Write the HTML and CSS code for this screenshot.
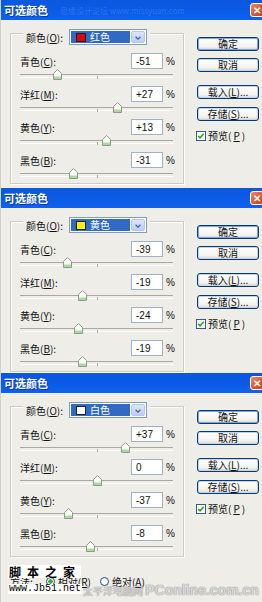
FILE: index.html
```html
<!DOCTYPE html>
<html>
<head>
    <meta charset="UTF-8">
    <link rel="stylesheet" href="styles.css">
</head>
<body>
    <svg class="defs" width="0" height="0">
        <symbol id="thumb" viewBox="0 0 9 11">
            <path d="M.5 10.5V4.5L4.5.5l4 4v6z" fill="#fbfdf9" stroke="#8a9c8b"/>
            <path d="M1 7.5h7v2.5H1z" fill="#a9dc98"/>
        </symbol>
        <symbol id="chev" viewBox="0 0 14 15">
            <path d="M4 6l3 3 3-3" fill="none" stroke="#4d6185" stroke-width="1.6"/>
        </symbol>
        <symbol id="check" viewBox="0 0 11 11">
            <rect x=".5" y=".5" width="10" height="10" fill="#fff" stroke="#1c5180"/>
            <path d="M2.5 5.5l2 2 4-4.5" fill="none" stroke="#21a121" stroke-width="1.6"/>
        </symbol>
    </svg>

    <!-- 红色 -->
    <div class="dialog d1">
        <div class="titlebar">
            <span class="title">可选颜色</span>
            <span class="title-mark">思缘设计论坛 www.missyuan.com</span>
            <span class="close">✕</span>
        </div>
        <div class="body">
            <div class="group">
                <div class="color-row">
                    <span class="lbl">颜色(<u>O</u>):</span>
                    <div class="combo">
                        <span class="sel"><i class="swatch red"></i>红色</span>
                        <span class="arrow"><svg><use href="#chev"/></svg></span>
                    </div>
                </div>
                <div class="adjs">
                    <div class="adj">
                        <div class="adj-top"><span class="lbl">青色(<u>C</u>):</span><input class="num" type="text" value="-51"><span class="pct">%</span></div>
                        <div class="slider"><svg class="thumb" style="left:24.5%"><use href="#thumb"/></svg></div>
                    </div>
                    <div class="adj">
                        <div class="adj-top"><span class="lbl">洋红(<u>M</u>):</span><input class="num" type="text" value="+27"><span class="pct">%</span></div>
                        <div class="slider"><svg class="thumb" style="left:63.5%"><use href="#thumb"/></svg></div>
                    </div>
                    <div class="adj">
                        <div class="adj-top"><span class="lbl">黄色(<u>Y</u>):</span><input class="num" type="text" value="+13"><span class="pct">%</span></div>
                        <div class="slider"><svg class="thumb" style="left:56.5%"><use href="#thumb"/></svg></div>
                    </div>
                    <div class="adj">
                        <div class="adj-top"><span class="lbl">黑色(<u>B</u>):</span><input class="num" type="text" value="-31"><span class="pct">%</span></div>
                        <div class="slider"><svg class="thumb" style="left:34.5%"><use href="#thumb"/></svg></div>
                    </div>
                </div>
            </div>
            <div class="side">
                <button class="btn btn-ok">确定</button>
                <button class="btn btn-cancel">取消</button>
                <button class="btn btn-load">载入(<u>L</u>)...</button>
                <button class="btn btn-save">存储(<u>S</u>)...</button>
                <label class="preview"><svg class="chk"><use href="#check"/></svg>预览(<u>P</u>)</label>
            </div>
        </div>
    </div>

    <!-- 黄色 -->
    <div class="dialog d2">
        <div class="titlebar">
            <span class="title">可选颜色</span>
            <span class="close">✕</span>
        </div>
        <div class="body">
            <div class="group">
                <div class="color-row">
                    <span class="lbl">颜色(<u>O</u>):</span>
                    <div class="combo">
                        <span class="sel"><i class="swatch yellow"></i>黄色</span>
                        <span class="arrow"><svg><use href="#chev"/></svg></span>
                    </div>
                </div>
                <div class="adjs">
                    <div class="adj">
                        <div class="adj-top"><span class="lbl">青色(<u>C</u>):</span><input class="num" type="text" value="-39"><span class="pct">%</span></div>
                        <div class="slider"><svg class="thumb" style="left:30.5%"><use href="#thumb"/></svg></div>
                    </div>
                    <div class="adj">
                        <div class="adj-top"><span class="lbl">洋红(<u>M</u>):</span><input class="num" type="text" value="-19"><span class="pct">%</span></div>
                        <div class="slider"><svg class="thumb" style="left:40.5%"><use href="#thumb"/></svg></div>
                    </div>
                    <div class="adj">
                        <div class="adj-top"><span class="lbl">黄色(<u>Y</u>):</span><input class="num" type="text" value="-24"><span class="pct">%</span></div>
                        <div class="slider"><svg class="thumb" style="left:38%"><use href="#thumb"/></svg></div>
                    </div>
                    <div class="adj">
                        <div class="adj-top"><span class="lbl">黑色(<u>B</u>):</span><input class="num" type="text" value="-19"><span class="pct">%</span></div>
                        <div class="slider"><svg class="thumb" style="left:40.5%"><use href="#thumb"/></svg></div>
                    </div>
                </div>
            </div>
            <div class="side">
                <button class="btn btn-ok">确定</button>
                <button class="btn btn-cancel">取消</button>
                <button class="btn btn-load">载入(<u>L</u>)...</button>
                <button class="btn btn-save">存储(<u>S</u>)...</button>
                <label class="preview"><svg class="chk"><use href="#check"/></svg>预览(<u>P</u>)</label>
            </div>
        </div>
    </div>

    <!-- 白色 -->
    <div class="dialog d3">
        <div class="titlebar">
            <span class="title">可选颜色</span>
            <span class="close">✕</span>
        </div>
        <div class="body">
            <div class="group">
                <div class="color-row">
                    <span class="lbl">颜色(<u>O</u>):</span>
                    <div class="combo">
                        <span class="sel"><i class="swatch white"></i>白色</span>
                        <span class="arrow"><svg><use href="#chev"/></svg></span>
                    </div>
                </div>
                <div class="adjs">
                    <div class="adj">
                        <div class="adj-top"><span class="lbl">青色(<u>C</u>):</span><input class="num" type="text" value="+37"><span class="pct">%</span></div>
                        <div class="slider"><svg class="thumb" style="left:68.5%"><use href="#thumb"/></svg></div>
                    </div>
                    <div class="adj">
                        <div class="adj-top"><span class="lbl">洋红(<u>M</u>):</span><input class="num" type="text" value="0"><span class="pct">%</span></div>
                        <div class="slider"><svg class="thumb" style="left:50%"><use href="#thumb"/></svg></div>
                    </div>
                    <div class="adj">
                        <div class="adj-top"><span class="lbl">黄色(<u>Y</u>):</span><input class="num" type="text" value="-37"><span class="pct">%</span></div>
                        <div class="slider"><svg class="thumb" style="left:31.5%"><use href="#thumb"/></svg></div>
                    </div>
                    <div class="adj">
                        <div class="adj-top"><span class="lbl">黑色(<u>B</u>):</span><input class="num" type="text" value="-8"><span class="pct">%</span></div>
                        <div class="slider"><svg class="thumb" style="left:46%"><use href="#thumb"/></svg></div>
                    </div>
                </div>
            </div>
            <div class="side">
                <button class="btn btn-ok">确定</button>
                <button class="btn btn-cancel">取消</button>
                <button class="btn btn-load">载入(<u>L</u>)...</button>
                <button class="btn btn-save">存储(<u>S</u>)...</button>
                <label class="preview"><svg class="chk"><use href="#check"/></svg>预览(<u>P</u>)</label>
            </div>
        </div>
        <div class="method">
            <span>方法:</span>
            <span class="radio on"></span><span>相对(<u>R</u>)</span>
            <span class="radio"></span><span>绝对(<u>A</u>)</span>
        </div>

        <!-- 水印 -->
        <div class="wm-jb">
            <span class="wm-name">脚本之家</span>
            <span class="wm-url">www.Jb51.net</span>
        </div>
        <div class="wm-pc">太平洋电脑网 <b>PConline.com.cn</b></div>
    </div>
</body>
</html>
```

FILE: styles.css
```css
* {
    box-sizing: border-box;
}

body {
    width: 262px;
    height: 602px;
    margin: 0;
    overflow: hidden;
    font-family: "Noto Sans CJK SC", "Liberation Sans", sans-serif;
    font-size: 10px;
    color: #111;
    background: #eeede8;
}

.defs {
    position: absolute;
}

.dialog {
    position: relative;
    background: #eeede8;
    border-left: 1px solid #d2d1c8;
    overflow: hidden;
}

.d1 { height: 188px; }
.d2 { height: 185px; }
.d3 { height: 229px; }

/* 标题栏 */
.titlebar {
    height: 20px;
    display: flex;
    align-items: center;
    padding-left: 3px;
    background: linear-gradient(#0b58dc, #0a5ae6 45%, #0d63ee);
    color: #fff;
}

.title {
    font-size: 11px;
    font-weight: bold;
    text-shadow: 1px 1px 0 #0a3a9c;
}

.title-mark {
    margin-left: 12px;
    font-size: 8px;
    color: rgba(255,255,255,0.16);
    white-space: nowrap;
}

.close {
    margin-left: auto;
    margin-right: -2px;
    width: 14px;
    height: 14px;
    border: 1px solid #fff;
    border-radius: 3px;
    background: linear-gradient(135deg, #ef8c6c, #d9542f 60%, #c2411f);
    color: #fff;
    font-size: 10px;
    font-weight: bold;
    line-height: 12px;
    text-align: center;
    flex-shrink: 0;
}

.body {
    display: flex;
    padding-top: 13px;
}

/* 分组框 */
.group {
    margin-left: 9px;
    width: 174px;
    height: 151px;
    padding: 0 10px 0 9px;
    border: 1px solid #cdccc2;
    box-shadow: inset 1px 1px 0 #fff, 1px 1px 0 #fff;
}

.color-row {
    display: flex;
    align-items: center;
    gap: 6px;
    width: fit-content;
    height: 16px;
    margin: -5px 0 0 3px;
    padding: 0 3px;
    background: #eeede8;
}

.color-row .lbl {
    width: 37px;
    white-space: nowrap;
}

.combo {
    display: flex;
    width: 78px;
    height: 16px;
    padding: 1px;
    border: 1px solid #7f9db9;
    background: #fff;
}

.sel {
    flex: 1;
    display: flex;
    align-items: center;
    gap: 4px;
    padding-left: 5px;
    background: #316ac5;
    color: #fff;
    line-height: 12px;
}

.swatch {
    width: 10px;
    height: 9px;
    border: 1px solid #222;
}

.swatch.red { background: #e0000e; }
.swatch.yellow { background: #fff200; }
.swatch.white { background: #fff; }

.arrow {
    width: 14px;
    margin-left: 1px;
    border-radius: 2px;
    background: linear-gradient(#dce6fb, #b9cdf6);
    border: 1px solid #b3c6ee;
}

.arrow svg {
    display: block;
    width: 12px;
    height: 12px;
}

.adjs {
    margin-top: 8px;
}

.adj-top {
    display: flex;
    align-items: center;
    height: 16px;
}

.adj-top .lbl {
    flex: 1;
    white-space: nowrap;
}

.num {
    width: 32px;
    height: 16px;
    margin: 0;
    padding: 0 0 0 4px;
    border: 1px solid #9fb1c5;
    font-family: "Liberation Sans", sans-serif;
    font-size: 10px;
    color: #111;
    background: #fff;
}

.pct {
    width: 10px;
    padding-left: 3px;
    font-family: "Liberation Sans", sans-serif;
}

.slider {
    position: relative;
    height: 17px;
}

.slider::before {
    content: "";
    position: absolute;
    left: 0;
    right: 0;
    top: 5px;
    height: 2px;
    border-top: 1px solid #a9a89f;
    border-bottom: 1px solid #fff;
}

.slider::after {
    content: "";
    position: absolute;
    left: 50%;
    top: 7px;
    width: 1px;
    height: 3px;
    background: #a9a89f;
}

.thumb {
    position: absolute;
    top: 0;
    width: 9px;
    height: 11px;
    margin-left: -4px;
    z-index: 1;
}

/* 右侧按钮 */
.side {
    display: flex;
    flex-direction: column;
    width: 62px;
    margin-left: 13px;
    padding-top: 4px;
}

.btn {
    height: 14px;
    padding: 0;
    border: 1px solid #003c74;
    border-radius: 3px;
    background: linear-gradient(#fff, #f4f3ee 70%, #dcd8cc);
    box-shadow: inset 0 0 0 1px #c2d3f2;
    font-family: "Noto Sans CJK SC", sans-serif;
    font-size: 10px;
    line-height: 12px;
    color: #111;
}

.btn-ok {
    box-shadow: inset 0 0 0 1px #7fa2e6;
    margin-bottom: 7px;
}

.btn-cancel { margin-bottom: 13px; }
.btn-load { margin-bottom: 8px; }
.btn-save { margin-bottom: 9px; }

.preview {
    display: flex;
    align-items: center;
    gap: 2px;
    margin-left: -1px;
    height: 11px;
}

.chk {
    width: 10px;
    height: 10px;
}

/* 方法 */
.method {
    display: flex;
    align-items: center;
    gap: 3px;
    margin-top: 17px;
    padding-left: 9px;
}

.method span:first-child {
    margin-right: 4px;
}

.radio {
    width: 9px;
    height: 9px;
    border: 1px solid #1c5180;
    border-radius: 50%;
    background: #fff;
    margin-left: 6px;
}

.radio.on {
    background: radial-gradient(circle, #3fae3f 0 2px, #fff 2.5px);
}

/* 水印 */
.wm-jb {
    position: absolute;
    left: 7px;
    top: 192px;
    display: flex;
    flex-direction: column;
    align-items: flex-start;
    gap: 6px;
}

.wm-name {
    background: #fff;
    color: #000;
    font-size: 12px;
    font-weight: bold;
    line-height: 13px;
    letter-spacing: 6px;
    padding-left: 1px;
}

.wm-url {
    background: #fff;
    color: #000;
    font-family: "Liberation Mono", monospace;
    font-size: 10px;
    line-height: 10px;
    padding: 0 1px;
}

.wm-pc {
    position: absolute;
    left: 82px;
    top: 209px;
    font-size: 10px;
    color: rgba(250,250,250,0.7);
    text-shadow: 0 0 1px #888, 0 0 1px #888;
    white-space: nowrap;
}

.wm-pc b {
    font-family: "Liberation Sans", sans-serif;
    font-size: 14px;
}
```
